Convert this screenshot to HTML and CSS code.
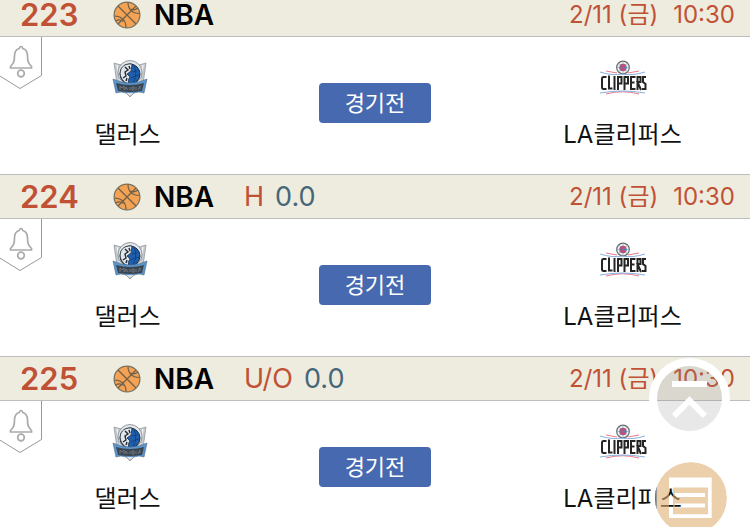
FILE: index.html
```
<!DOCTYPE html>
<html lang="ko">
<head>
    <meta charset="UTF-8">
    <meta name="viewport" content="width=device-width, initial-scale=1.0">
    <title>NBA 경기 일정</title>
    <link rel="stylesheet" href="styles.css">
</head>
<body>
    <!-- Shared icons -->
    <svg class="sprite" aria-hidden="true">
        <symbol id="ball" viewBox="0 0 28 28">
            <circle cx="14" cy="14" r="12.9" fill="#f4a254" stroke="#77705f" stroke-width="1.200"/>
            <path d="M5 5L23 23M23 5L5 23M15 1.500C15 8 19 12.500 26.500 12.500M17.500 8Q21 10 25 7M1.500 15C8 15 13 19 13 26.500M2.500 20Q7 17.500 10.500 20.500" fill="none" stroke="#6f6049" stroke-width="1.200"/>
        </symbol>
        <symbol id="bell" viewBox="0 0 43 53">
            <path d="M41.500 0V38.500L20 51.500L-1 38.500" fill="#fff" stroke="#999" stroke-width="1"/>
            <path d="M21 9.500C19.500 9.500 19.500 11 19.300 11.500C15.500 12.500 14.500 16 14.500 19C14.500 25 13.500 26 10.500 29.500V31H31.500V29.500C28.500 26 27.500 25 27.500 19C27.500 16 26.500 12.500 22.700 11.500C22.500 11 22.500 9.500 21 9.500Z" fill="none" stroke="#aaa" stroke-width="1.700"/>
            <circle cx="21" cy="36.500" r="3.300" fill="none" stroke="#aaa" stroke-width="1.700"/>
        </symbol>
        <symbol id="mavericks" viewBox="-2 -1 36 38">
            <path d="M2 3L9 5L27 5L34 3L31 24L18 37L5 24Z" fill="#c3c9ce" stroke="#8b9298" stroke-width=".7"/>
            <path d="M5 5L9 23M31 5L27 23" stroke="#eef0f2" stroke-width="1.500"/>
            <circle cx="18" cy="12.500" r="12" fill="#e2e6e8" stroke="#7e868c" stroke-width=".8"/>
            <circle cx="18" cy="14" r="10" fill="#1d5fae" stroke="#1b2a3d"/>
            <path d="M20 4C11 3 7 9 8.500 16Q11 23 17 24Q15 20 18 17L15 14L19 11Z" fill="#e4e7e9" stroke="#26313e" stroke-width=".8"/>
            <path d="M13 7L16 10L13 12L14 16L11 18M17 6L18 9M15 18L14 21" fill="none" stroke="#1f2b38" stroke-width="1.400"/>
            <path d="M20 12Q25 12 27 9M19 18Q24 15 28 15M22 5Q26 14 21 23" fill="none" stroke="#123c75" stroke-width=".8"/>
            <path d="M1 19Q18 27 35 19L32 33Q27 31 22 33L18 35L14 33Q9 31 4 33Z" fill="#5a94cc" stroke="#4b6884" stroke-width=".6"/>
            <path d="M4 23Q18 27 32 23L30 31Q18 33 6 31Z" fill="#3b4650"/>
            <path d="M8 30V26L10 28L12 26V30M13 30L14 27L16 30M18 27V30M20 27H22V30H20ZM24 27V30M26 30L28 26V29" fill="none" stroke="#78828b" stroke-width=".8"/>
            <path d="M14 33L18 36.500L22 33" fill="#e0e3e5" stroke="#8b9298" stroke-width=".6"/>
        </symbol>
        <symbol id="clippers" viewBox="0 0 48 36">
            <circle cx="24" cy="7.500" r="6.300" fill="#f3f3f3" stroke="#62676b" stroke-width="1.200"/>
            <path d="M24 1V14M17.500 7.500H30.500M19.500 3L28.500 12M28.500 3L19.500 12" stroke="#92979b" stroke-width=".6"/>
            <circle cx="24" cy="7.500" r="3.800" fill="#5b7db8"/>
            <path d="M26 5.500H22.500V9.500H26" fill="none" stroke="#e2405e" stroke-width="1.800"/>
            <path d="M7 11L18 13M40 11L29 13M7 34Q23.500 29.500 40 34" fill="none" stroke="#e56c7d" stroke-width=".9"/>
            <path d="M1 12Q14 16 23.500 14Q33 16 46 12M1 33Q23.500 29 46 33" fill="none" stroke="#79a7db" stroke-width=".9"/>
            <path d="M7.500 17H4.500Q3 17 3 19V27Q3 29 4.500 29H7.500M10 15.500V28.500H13.500M15.500 16V30M19 30V17H22.500V23.500H19M25.500 30V17H29V23.500H25.500M36.500 17H32V29H36.500M32 22.500H35.500M38.500 30V17H41.500V22H38.500L42 30M47 17H44V22L46.500 24V29H43" fill="none" stroke="#252525" stroke-width="2"/>
        </symbol>
    </svg>

    <main class="match-list">
        <section class="match">
            <header class="match-header">
                <strong class="match-no">223</strong>
                <svg class="ball"><use href="#ball"/></svg>
                <h2 class="league">NBA</h2>
                <time class="match-time"><span>2/11 (금)</span><span>10:30</span></time>
            </header>
            <div class="match-body">
                <button class="alarm-btn" aria-label="알림"><svg class="alarm-icon"><use href="#bell"/></svg></button>
                <div class="team">
                    <svg class="team-logo"><use href="#mavericks"/></svg>
                    <p class="team-name">댈러스</p>
                </div>
                <button class="status-btn">경기전</button>
                <div class="team">
                    <svg class="team-logo"><use href="#clippers"/></svg>
                    <p class="team-name">LA클리퍼스</p>
                </div>
            </div>
        </section>

        <section class="match">
            <header class="match-header">
                <strong class="match-no">224</strong>
                <svg class="ball"><use href="#ball"/></svg>
                <h2 class="league">NBA</h2>
                <p class="odds"><span class="odds-type">H</span><span>0.0</span></p>
                <time class="match-time"><span>2/11 (금)</span><span>10:30</span></time>
            </header>
            <div class="match-body">
                <button class="alarm-btn" aria-label="알림"><svg class="alarm-icon"><use href="#bell"/></svg></button>
                <div class="team">
                    <svg class="team-logo"><use href="#mavericks"/></svg>
                    <p class="team-name">댈러스</p>
                </div>
                <button class="status-btn">경기전</button>
                <div class="team">
                    <svg class="team-logo"><use href="#clippers"/></svg>
                    <p class="team-name">LA클리퍼스</p>
                </div>
            </div>
        </section>

        <section class="match">
            <header class="match-header">
                <strong class="match-no">225</strong>
                <svg class="ball"><use href="#ball"/></svg>
                <h2 class="league">NBA</h2>
                <p class="odds"><span class="odds-type">U/O</span><span>0.0</span></p>
                <time class="match-time"><span>2/11 (금)</span><span>10:30</span></time>
            </header>
            <div class="match-body">
                <button class="alarm-btn" aria-label="알림"><svg class="alarm-icon"><use href="#bell"/></svg></button>
                <div class="team">
                    <svg class="team-logo"><use href="#mavericks"/></svg>
                    <p class="team-name">댈러스</p>
                </div>
                <button class="status-btn">경기전</button>
                <div class="team">
                    <svg class="team-logo"><use href="#clippers"/></svg>
                    <p class="team-name">LA클리퍼스</p>
                </div>
            </div>
        </section>
    </main>

    <!-- Floating buttons -->
    <nav class="floating">
        <button class="float-btn" aria-label="맨 위로">
            <svg viewBox="0 0 82 82">
                <circle cx="40.500" cy="41.500" r="33" fill="#8c8c8c" fill-opacity=".2"/>
                <circle cx="40.500" cy="41.500" r="36.500" fill="none" stroke="#fff" stroke-width="8"/>
                <path d="M23 27H58" stroke="#fff" stroke-width="6"/>
                <path d="M25 59L40.500 43.500L56 59" fill="none" stroke="#fff" stroke-width="6"/>
            </svg>
        </button>
        <button class="float-btn" aria-label="목록">
            <svg viewBox="0 0 82 82">
                <!-- frame and lines are cut out of the disc -->
                <path d="M6 42A36 36 0 1 1 78 42A36 36 0 1 1 6 42ZM20 21.500V62H62.700V21.500ZM24 31.500H59V58.300H24ZM26 37V41H56V37ZM26 47.500V51.500H56V47.500Z" fill="#dfae70" fill-opacity=".58" fill-rule="evenodd"/>
                <circle cx="42" cy="42" r="38.500" fill="none" stroke="#fff" stroke-width="5"/>
            </svg>
        </button>
    </nav>
</body>
</html>
```
FILE: styles.css
```
* {
    margin: 0;
    padding: 0;
    box-sizing: border-box;
}

:root {
    --red: #c05135;
    --teal: #456679;
    --blue: #4769b0;
    --cream: #eeecdf;
    --line: #bbbdbe;
}

body {
    font-family: Inter, 'Noto Sans CJK KR', sans-serif;
    background: #fff;
    color: #111;
    height: 100vh;
    overflow: hidden;
}

button {
    font: inherit;
    border: none;
    background: none;
    cursor: pointer;
}

svg {
    display: block;
}

.sprite {
    position: absolute;
    width: 0;
    height: 0;
}

/* The list is scrolled slightly past the first header */
.match-list {
    margin-top: -8px;
}

.match-header {
    display: flex;
    align-items: center;
    height: 45px;
    padding: 0 15px 0 20px;
    background: var(--cream);
    border-top: 1px solid var(--line);
    border-bottom: 1px solid var(--line);
    font-size: 24px;
    line-height: 28px;
}

.match-no {
    width: 93px;
    color: var(--red);
    font-size: 31px;
    font-weight: 600;
}

.ball {
    width: 28px;
    height: 28px;
}

.league {
    width: 90px;
    margin-left: 13px;
    color: #000;
    font-size: 28px;
    font-weight: 600;
}

.odds {
    display: flex;
    gap: 11px;
    color: var(--teal);
    font-size: 27px;
}

.odds-type {
    color: var(--red);
}

.match-time {
    display: flex;
    align-items: baseline;
    gap: 15px;
    margin-left: auto;
    color: var(--red);
}

.match-body {
    position: relative;
    display: grid;
    grid-template-columns: 1fr 112px 1fr;
    align-items: start;
    height: 137px;
}

.alarm-btn {
    position: absolute;
    top: 0;
    left: 0;
}

.alarm-icon {
    width: 43px;
    height: 53px;
}

.team {
    display: flex;
    flex-direction: column;
    align-items: center;
    gap: 20px;
    padding-top: 22px;
}

.team:first-of-type {
    padding-right: 64px;
}

.team:last-of-type {
    padding-left: 64px;
}

.team-logo {
    width: 48px;
    height: 38px;
}

.team-name {
    font-size: 24px;
    line-height: 36px;
}

.status-btn {
    height: 40px;
    margin-top: 46px;
    border-radius: 4px;
    background: var(--blue);
    color: #fff;
    font-size: 22px;
    line-height: 36px;
}

.floating {
    position: fixed;
    top: 357px;
    right: 19px;
    display: flex;
    flex-direction: column;
    gap: 17px;
}

.float-btn {
    width: 82px;
    height: 82px;
}
```
